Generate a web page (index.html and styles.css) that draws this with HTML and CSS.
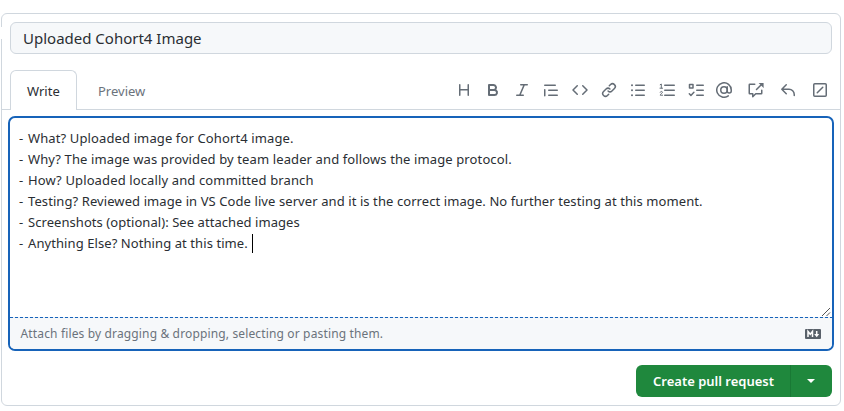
FILE: index.html
```html
<!DOCTYPE html>
<html lang="en">
<head>
<meta charset="utf-8">
<title>Open a pull request</title>
<link rel="stylesheet" href="styles.css">
</head>
<body>
<main class="panel">
  <span class="pointer"></span>
  <div class="title"><span>Uploaded Cohort4 Image</span></div>
  <header class="tabs">
    <div class="tab active"><span>Write</span></div>
    <div class="tab"><span>Preview</span></div>
    <div class="toolbar">
      <svg viewBox="0 0 16 16"><path d="M3.750 2.750v10.500M12.250 2.750v10.500M3.750 7.750h8.500" class="line"/></svg>
      <svg viewBox="0 0 16 16"><path d="M4 2h4.500a3.501 3.501 0 0 1 2.852 5.530A3.499 3.499 0 0 1 9.500 14H4a1 1 0 0 1-1-1V3a1 1 0 0 1 1-1Zm1 7v3h4.500a1.500 1.500 0 0 0 0-3Zm3.500-2a1.500 1.500 0 0 0 0-3H5v3Z"/></svg>
      <svg viewBox="0 0 16 16"><path d="M6 2.750A.750.750 0 0 1 6.750 2h6.500a.750.750 0 0 1 0 1.500h-2.505l-3.858 9H9.250a.750.750 0 0 1 0 1.500h-6.500a.750.750 0 0 1 0-1.500h2.505l3.858-9H6.750A.750.750 0 0 1 6 2.750Z"/></svg>
      <svg viewBox="0 0 16 16"><path d="M1.750 2.500h10.500a.750.750 0 0 1 0 1.500H1.750a.750.750 0 0 1 0-1.500Zm4 5h8.500a.750.750 0 0 1 0 1.500h-8.500a.750.750 0 0 1 0-1.500Zm0 5h8.500a.750.750 0 0 1 0 1.500h-8.500a.750.750 0 0 1 0-1.500ZM2.500 7.750v6a.750.750 0 0 1-1.500 0v-6a.750.750 0 0 1 1.500 0Z"/></svg>
      <svg viewBox="0 0 16 16"><path d="M5.250 3.750 1 8l4.250 4.250M10.750 3.750 15 8l-4.250 4.250" class="line"/></svg>
      <svg viewBox="0 0 16 16"><path d="m7.775 3.275 1.250-1.250a3.500 3.500 0 1 1 4.950 4.950l-2.500 2.500a3.500 3.500 0 0 1-4.950 0 .751.751 0 0 1 .018-1.042.751.751 0 0 1 1.042-.018 1.998 1.998 0 0 0 2.830 0l2.500-2.500a2.002 2.002 0 0 0-2.830-2.830l-1.250 1.250a.751.751 0 0 1-1.042-.018.751.751 0 0 1-.018-1.042Zm-4.690 9.640a1.998 1.998 0 0 0 2.830 0l1.250-1.250a.751.751 0 0 1 1.042.018.751.751 0 0 1 .018 1.042l-1.250 1.250a3.500 3.500 0 1 1-4.950-4.950l2.500-2.500a3.500 3.500 0 0 1 4.950 0 .751.751 0 0 1-.018 1.042.751.751 0 0 1-1.042.018 1.998 1.998 0 0 0-2.830 0l-2.500 2.500a1.998 1.998 0 0 0 0 2.830Z"/></svg>
      <svg viewBox="0 0 16 16"><path d="M5.750 3.250h8.500M5.750 8.250h8.500M5.750 13.250h8.500" class="line"/><circle cx="2" cy="3.250" r="1"/><circle cx="2" cy="8.250" r="1"/><circle cx="2" cy="13.250" r="1"/></svg>
      <svg class="list" viewBox="0 0 16 16"><path d="M5.750 3.250h9.500M5.750 8.250h9.500M5.750 13.250h9.500" class="line"/><path d="M1.200 2.700 2.300 2v4M1 6.200h2.600M1.200 10.200c.3-1.100 2.200-1 2.200.1 0 1-2.200 1.700-2.200 2.900h2.400" class="thin"/></svg>
      <svg class="tasks" viewBox="0 0 16 16"><path d="M1.500 2.500h3.500v3.500H1.500zM8.750 3.250h6.500M8.750 8.250h6.500M8.750 13.250h6.500M1.300 11.800l1.600 1.600 3-3.200" class="line"/></svg>
      <svg class="mention" viewBox="0 0 16 16"><path d="M11.200 4.750V8.900a2 2 0 0 0 4.050 0V8A7.250 7.250 0 1 0 12.300 13.850" class="line"/><circle cx="8" cy="8" r="3.250" class="line"/></svg>
      <svg class="wide" viewBox="0 0 16 16"><path d="M6.750 2.250H1.750a.5.5 0 0 0-.5.5v8.500a.5.5 0 0 0 .5.5h3v3l3-3h5.500a.5.5 0 0 0 .5-.5V8.250M8.500 7.500 13 3" class="line"/><path d="M10.600 1h5v5z"/></svg>
      <svg class="wide" viewBox="0 0 16 16"><path d="M6.250 2.800 1.800 7.250l4.450 4.450M2 7.250h7A5.250 5.250 0 0 1 14.250 12.500v1" class="line"/></svg>
      <svg class="wide last" viewBox="0 0 16 16"><rect x="1.750" y="1.750" width="12.500" height="12.500" rx="1" class="line"/><path d="m5.250 10.750 5.500-5.500" class="line"/></svg>
    </div>
  </header>
  <section class="editor">
    <div class="body">
      <p><span class="mark">- </span><span class="l1">What? Uploaded image for Cohort4 image.</span></p>
      <p><span class="mark">- </span><span class="l2">Why? The image was provided by team leader and follows the image protocol.</span></p>
      <p><span class="mark">- </span><span class="l3">How? Uploaded locally and committed branch</span></p>
      <p><span class="mark">- </span><span class="l4">Testing? Reviewed image in VS Code live server and it is the correct image. No further testing at this moment.</span></p>
      <p><span class="mark">- </span><span class="l5">Screenshots (optional): See attached images</span></p>
      <p><span class="mark">- </span><span class="l6">Anything Else? Nothing at this time.</span><i class="caret"></i></p>
      <svg class="grip" viewBox="0 0 10 10"><path d="M1 9 9 1M5.500 9 9 5.500"/></svg>
    </div>
    <div class="dash"></div>
    <footer class="attach">
      <span>Attach files by dragging &amp; dropping, selecting or pasting them.</span>
      <svg class="md" viewBox="0 0 16 10"><rect width="16" height="10" rx="1"/><path d="M3 8V2.500l2.250 2.800L7.500 2.500V8" class="m"/><path d="M11.700 2v4" class="m"/><path d="M9.200 5h5l-2.500 3.200z" class="arrow"/></svg>
    </footer>
  </section>
  <div class="actions">
    <div class="button"><div class="label"><span>Create pull request</span></div><div class="more"><i></i></div></div>
  </div>
</main>
</body>
</html>
```
FILE: styles.css
```css
* { box-sizing: border-box; }
body {
  margin: 0;
  height: 411px;
  overflow: hidden;
  padding: 13px 3px 5px 1px;
  background: #fff;
  color: #2a2e33;
  font: 13px/21px "Noto Sans", "Open Sans", sans-serif;
}
span { white-space: nowrap; }
.panel {
  position: relative;
  height: 393px;
  border: 1px solid #d0d7de;
  border-radius: 6px;
  padding-top: 8px;
}
.pointer {
  position: absolute;
  left: -2px;
  top: 13px;
  width: 3px;
  height: 12px;
  background: #fff;
}
.title {
  height: 32px;
  margin: 0 8px;
  padding: 0 12px;
  border: 1px solid #d0d7de;
  border-radius: 6px;
  background: #f6f8fa;
  font-size: 15px;
  line-height: 31px;
}
.tabs {
  display: flex;
  height: 56px;
  padding: 16px 12px 0 8px;
  border-bottom: 1px solid #d0d7de;
}
.tab {
  height: 40px;
  width: 88px;
  padding: 0 21px;
  line-height: 42px;
  color: #6b737c;
}
.tab.active {
  width: 67px;
  padding: 0 16px;
  line-height: 40px;
  color: #2a2e33;
  background: #fff;
  border: 1px solid #d0d7de;
  border-bottom: 0;
  border-radius: 6px 6px 0 0;
}
.toolbar {
  display: flex;
  margin-left: auto;
  padding-top: 12px;
  gap: 13px;
}
svg { display: block; flex: none; }
.toolbar svg { width: 16px; height: 16px; fill: #656d76; }
.toolbar .tasks { margin-left: 0.500px; }
.toolbar .mention { margin-left: -1px; }
.toolbar .wide { margin-left: 3px; }
.toolbar .line, .toolbar .thin {
  fill: none;
  stroke: #656d76;
  stroke-width: 1.500;
  stroke-linecap: round;
  stroke-linejoin: round;
}
.toolbar .thin { stroke-width: 1; }
.editor {
  height: 235px;
  margin: 6px 6px 0;
  border: 2px solid #1763b9;
  border-radius: 7px;
  overflow: hidden;
}
.body {
  position: relative;
  height: 199px;
  padding: 10px 9px;
}
p { display: flex; align-items: center; height: 21px; margin: 0; }
.mark { width: 9px; }
.l1 { letter-spacing: 0.120px; }
.l2 { letter-spacing: 0.115px; }
.l3 { letter-spacing: 0.130px; }
.l4 { letter-spacing: 0.086px; }
.l5 { letter-spacing: 0.060px; }
.l6 { letter-spacing: 0.080px; }
.caret { width: 1px; height: 19px; margin-left: 4px; background: #000; }
.grip {
  position: absolute;
  right: 1px;
  bottom: 0;
  width: 10px;
  height: 10px;
  fill: none;
  stroke: #555;
  stroke-width: 1;
}
.dash {
  height: 1px;
  background: repeating-linear-gradient(90deg, #1763b9 0 3px, #e3edf8 3px 5px);
}
.attach {
  display: flex;
  align-items: center;
  justify-content: space-between;
  height: 31px;
  padding: 0 11px 0 10.500px;
  background: #f6f8fa;
  color: #6b737c;
  font-size: 12px;
  letter-spacing: 0.145px;
}
.md { width: 16px; height: 10px; fill: #59616a; }
.md .m { fill: none; stroke: #fff; stroke-width: 1.500; }
.md .arrow { fill: #fff; }
.actions { display: flex; justify-content: flex-end; padding: 14px 8px 0; }
.button {
  display: flex;
  width: 196px;
  height: 32px;
  border-radius: 6px;
  background: #1f883d;
  color: #fff;
  font-weight: 600;
  line-height: 32px;
}
.label { width: 155px; padding-left: 17px; border-right: 1px solid #197935; }
.more { display: flex; flex: 1; align-items: center; justify-content: center; }
.more i {
  margin-right: 1px;
  border: 4px solid transparent;
  border-top-color: #fff;
  border-bottom: 0;
}
```
